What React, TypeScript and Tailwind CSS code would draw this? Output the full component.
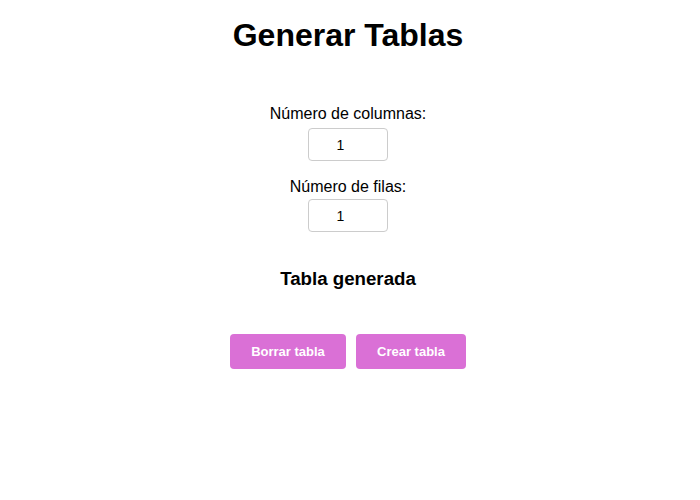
export default function App() {
  return (
    <div
      className="flex w-[696px] min-h-[500px] flex-col items-center bg-white text-black"
      style={{ fontFamily: '"Liberation Sans", Arial, sans-serif' }}
    >
      <h1 className="mt-[17px] text-[32px] font-bold leading-[37px]">Generar Tablas</h1>

      <div className="mt-[51px] flex flex-col items-center">
        <label className="text-[16px] leading-[18px]">Número de columnas:</label>
        <input
          type="number"
          defaultValue={1}
          className="mt-[5px] h-[33px] w-[80px] rounded-[4px] border border-[#cccccc] text-center text-[14px] text-black outline-none [appearance:textfield]"
        />
        <label className="mt-[17px] text-[16px] leading-[18px]">Número de filas:</label>
        <input
          type="number"
          defaultValue={1}
          className="mt-[3px] h-[33px] w-[80px] rounded-[4px] border border-[#cccccc] text-center text-[14px] text-black outline-none [appearance:textfield]"
        />
      </div>

      <h2 className="mt-[36px] text-[18.7px] font-bold leading-[22px]">Tabla generada</h2>

      <div className="mt-[44px] flex gap-[10px]">
        <button className="h-[35px] w-[116px] rounded-[4px] bg-[#da70d6] text-[13px] font-bold text-white">
          Borrar tabla
        </button>
        <button className="h-[35px] w-[110px] rounded-[4px] bg-[#da70d6] text-[13px] font-bold text-white">
          Crear tabla
        </button>
      </div>
    </div>
  );
}
